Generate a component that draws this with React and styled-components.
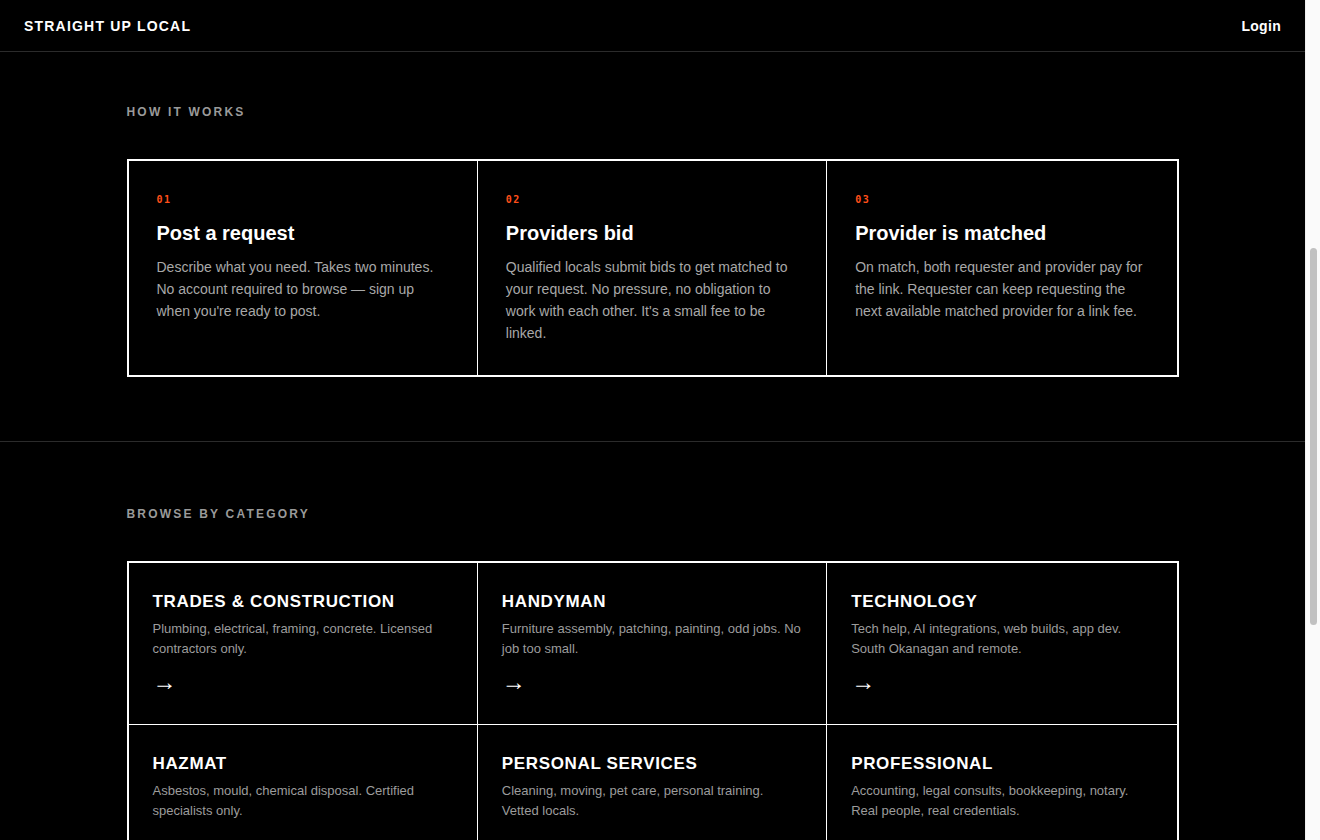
import React from "react";
import styled, { createGlobalStyle } from "styled-components";

const GlobalStyle = createGlobalStyle`
  html, body {
    margin: 0;
    padding: 0;
    height: 100%;
    overflow: hidden;
    background: #000;
    color: #fff;
    font-family: "Liberation Sans", Arial, Helvetica, sans-serif;
  }
  #root { height: 100%; }
  * { box-sizing: border-box; }
`;

const Page = styled.div`
  height: 100vh;
  overflow-y: auto;
  padding-right: 15px;
  background: #000;
  scrollbar-width: none;
  &::-webkit-scrollbar { display: none; }
`;

// the browser scrollbar, drawn over the right edge
const ScrollTrack = styled.div`
  position: fixed;
  top: 0;
  right: 0;
  width: 15px;
  height: 100vh;
  background: #fafafa;
  border-left: 1px solid #efefef;
`;

const ScrollThumb = styled.div`
  position: absolute;
  top: 248px;
  left: 4px;
  width: 7px;
  height: 377px;
  border-radius: 4px;
  background: #c1c1c1;
`;

const Header = styled.header`
  height: 52px;
  display: flex;
  align-items: center;
  justify-content: space-between;
  padding: 0 24px;
  border-bottom: 1px solid #2b2b2b;
`;

const Logo = styled.a`
  font-size: 14px;
  font-weight: 700;
  letter-spacing: 1.2px;
  color: #fff;
  text-decoration: none;
  text-transform: uppercase;
`;

const LoginLink = styled.a`
  font-size: 14px;
  font-weight: 700;
  letter-spacing: 0.3px;
  color: #fff;
  text-decoration: none;
`;

const Section = styled.section`
  padding: ${props => props.$top}px 0 ${props => props.$bottom}px;
  border-bottom: ${props => (props.$divider ? "1px solid #2b2b2b" : "none")};
`;

const Container = styled.div`
  width: 1052px;
  margin: 0 auto;
`;

const SectionLabel = styled.h2`
  margin: 0 0 39px;
  font-size: 12px;
  line-height: 16px;
  font-weight: 700;
  letter-spacing: 2.2px;
  color: #9a9a9a;
  text-transform: uppercase;
`;

const Grid = styled.div`
  display: grid;
  grid-template-columns: repeat(3, 1fr);
  border: 2px solid #fff;
`;

const StepCell = styled.div`
  padding: 31px 28px 31px;
  border-right: ${props => (props.$last ? "none" : "1px solid #fff")};
`;

const StepNumber = styled.div`
  font-family: "DejaVu Sans Mono", "Liberation Mono", monospace;
  font-size: 10px;
  line-height: 16px;
  font-weight: 700;
  letter-spacing: 1.5px;
  color: #ff4f1a;
  margin-bottom: 11px;
`;

const StepTitle = styled.h3`
  margin: 0 0 9px;
  font-size: 20px;
  line-height: 28px;
  font-weight: 700;
  color: #fff;
`;

const StepText = styled.p`
  margin: 0;
  font-size: 14px;
  line-height: 22px;
  color: #a8a8a8;
`;

const CategoryCell = styled.a`
  display: block;
  padding: 28px 24px 30px;
  color: #fff;
  text-decoration: none;
  border-right: ${props => (props.$lastCol ? "none" : "1px solid #fff")};
  border-bottom: ${props => (props.$lastRow ? "none" : "1px solid #fff")};
`;

const CategoryTitle = styled.h3`
  margin: 0 0 6px;
  font-size: 17px;
  line-height: 22px;
  font-weight: 700;
  letter-spacing: 0.65px;
  text-transform: uppercase;
`;

const CategoryText = styled.p`
  margin: 0 0 11px;
  font-size: 13px;
  line-height: 20px;
  color: #9c9c9c;
`;

const Arrow = styled.span`
  display: block;
  font-size: 24px;
  line-height: 24px;
  color: #fff;
`;

const steps = [
  {
    n: "01",
    title: "Post a request",
    text: "Describe what you need. Takes two minutes. No account required to browse — sign up when you're ready to post.",
  },
  {
    n: "02",
    title: "Providers bid",
    text: "Qualified locals submit bids to get matched to your request. No pressure, no obligation to work with each other. It's a small fee to be linked.",
  },
  {
    n: "03",
    title: "Provider is matched",
    text: "On match, both requester and provider pay for the link. Requester can keep requesting the next available matched provider for a link fee.",
  },
];

const categories = [
  { title: "Trades & Construction", text: "Plumbing, electrical, framing, concrete. Licensed contractors only." },
  { title: "Handyman", text: "Furniture assembly, patching, painting, odd jobs. No job too small." },
  { title: "Technology", text: "Tech help, AI integrations, web builds, app dev. South Okanagan and remote." },
  { title: "Hazmat", text: "Asbestos, mould, chemical disposal. Certified specialists only." },
  { title: "Personal Services", text: "Cleaning, moving, pet care, personal training. Vetted locals." },
  { title: "Professional", text: "Accounting, legal consults, bookkeeping, notary. Real people, real credentials." },
];

export default function App() {
  return (
    <>
      <GlobalStyle />
      <Page>
        <Header>
          <Logo href="#">Straight Up Local</Logo>
          <LoginLink href="#">Login</LoginLink>
        </Header>

        <Section $top={52} $bottom={64} $divider>
          <Container>
            <SectionLabel>How it works</SectionLabel>
            <Grid>
              {steps.map((s, i) => (
                <StepCell key={s.n} $last={i === steps.length - 1}>
                  <StepNumber>{s.n}</StepNumber>
                  <StepTitle>{s.title}</StepTitle>
                  <StepText>{s.text}</StepText>
                </StepCell>
              ))}
            </Grid>
          </Container>
        </Section>

        <Section $top={64} $bottom={64}>
          <Container>
            <SectionLabel>Browse by category</SectionLabel>
            <Grid>
              {categories.map((c, i) => (
                <CategoryCell
                  key={c.title}
                  href="#"
                  $lastCol={i % 3 === 2}
                  $lastRow={i >= 3}
                >
                  <CategoryTitle>{c.title}</CategoryTitle>
                  <CategoryText>{c.text}</CategoryText>
                  <Arrow>→</Arrow>
                </CategoryCell>
              ))}
            </Grid>
          </Container>
        </Section>
      </Page>
      <ScrollTrack>
        <ScrollThumb />
      </ScrollTrack>
    </>
  );
}
